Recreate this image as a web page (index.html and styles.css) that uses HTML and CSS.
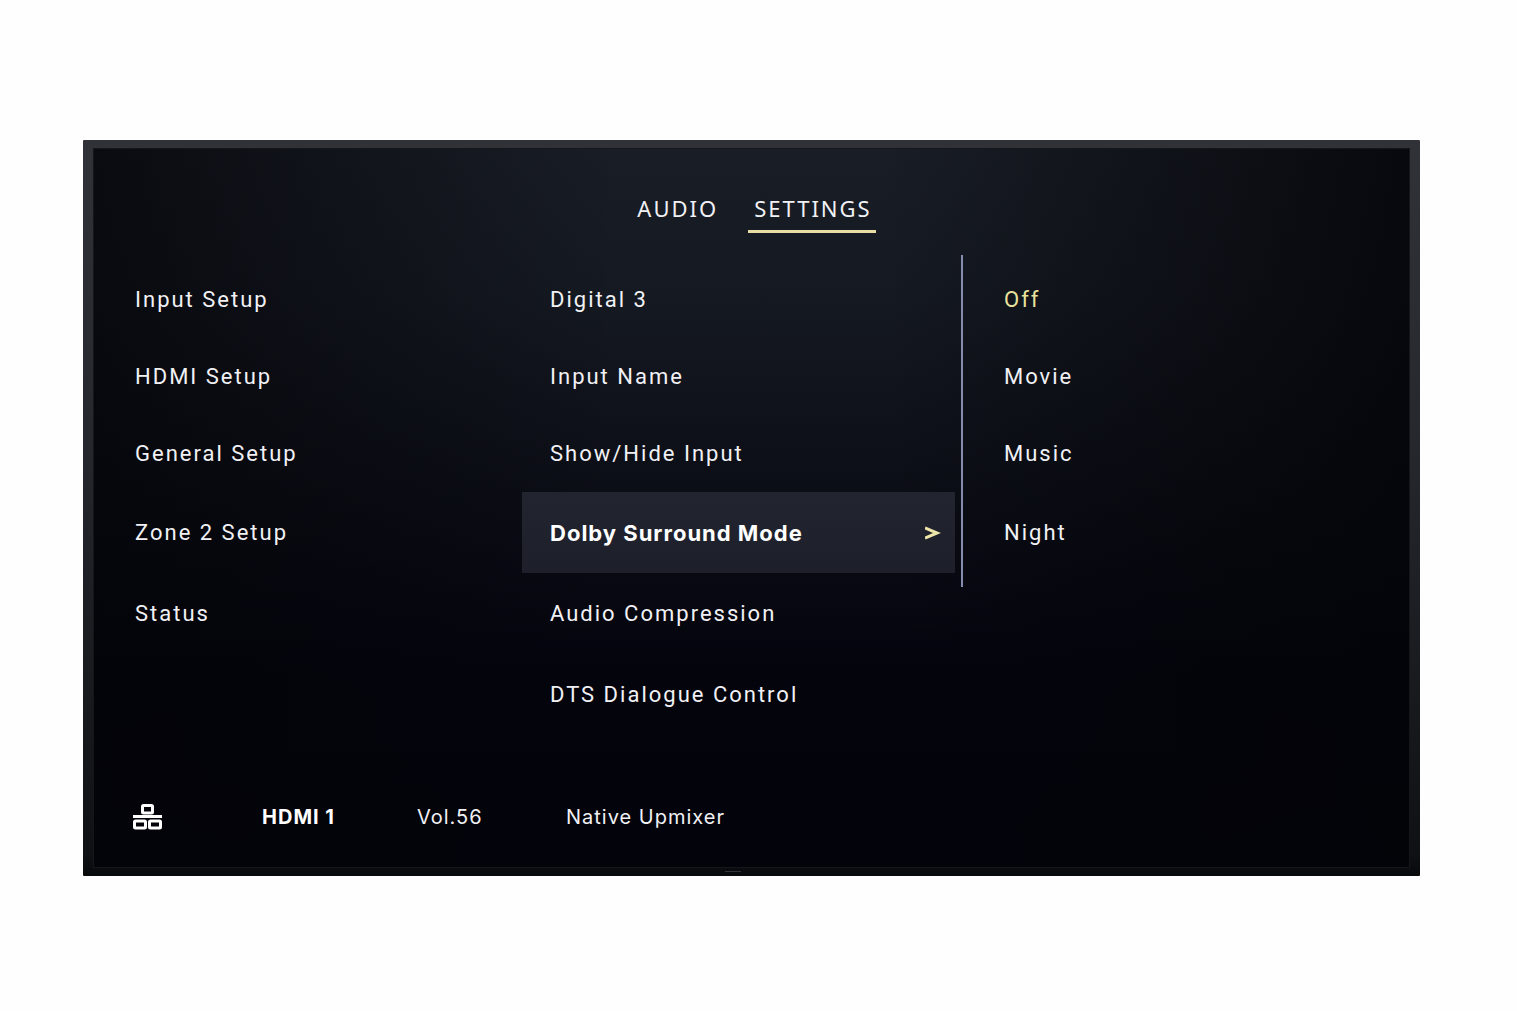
FILE: index.html
```html
<!DOCTYPE html>
<html lang="en">
<head>
  <meta charset="utf-8">
  <title>Settings</title>
  <link rel="stylesheet" href="styles.css">
</head>
<body>
  <div class="tv">
    <main class="screen">
      <nav class="tabs">
        <button class="tab">AUDIO</button>
        <button class="tab active">SETTINGS</button>
      </nav>

      <div class="columns">
        <!-- Setup sections -->
        <ul class="menu sections">
          <li><button>Input Setup</button></li>
          <li><button>HDMI Setup</button></li>
          <li><button>General Setup</button></li>
          <li><button>Zone 2 Setup</button></li>
          <li><button>Status</button></li>
        </ul>

        <!-- Input Setup entries -->
        <ul class="menu entries">
          <li><button>Digital 3</button></li>
          <li><button>Input Name</button></li>
          <li><button>Show/Hide Input</button></li>
          <li>
            <button class="selected">
              <span>Dolby Surround Mode</span>
              <svg class="arrow" width="16" height="14" viewBox="0 0 16 14" aria-hidden="true">
                <path d="M0 2 L12 7 L0 12" fill="none" stroke="currentColor" stroke-width="3"/>
              </svg>
            </button>
          </li>
          <li><button>Audio Compression</button></li>
          <li><button>DTS Dialogue Control</button></li>
        </ul>

        <!-- Values -->
        <ul class="menu values">
          <li><button class="current">Off</button></li>
          <li><button>Movie</button></li>
          <li><button>Music</button></li>
          <li><button>Night</button></li>
        </ul>
      </div>

      <footer class="status">
        <svg class="network" width="30" height="26" viewBox="0 0 30 26" role="img" aria-label="Wired network">
          <g fill="none" stroke="currentColor" stroke-width="3">
            <rect x="9.500" y="1.500" width="10" height="7.500" rx="1"/>
            <rect x="1.500" y="17" width="11" height="7" rx="1"/>
            <rect x="16.500" y="17" width="11" height="7" rx="1"/>
            <path d="M0 12.500 H29"/>
          </g>
        </svg>
        <span class="source">HDMI 1</span>
        <span class="volume">Vol.56</span>
        <span class="mode">Native Upmixer</span>
      </footer>
    </main>
    <div class="sensor"></div>
  </div>
</body>
</html>
```
FILE: styles.css
```css
* {
  box-sizing: border-box;
}
body {
  margin: 0;
  padding: 140px 97px 134px 83px;
  background: #fefefe;
  color: #f1f1f5;
  font-family: Roboto, "Noto Sans", sans-serif;
  font-size: 22px;
  line-height: 28px;
  letter-spacing: 2px;
}
button {
  margin: 0;
  padding: 0;
  border: none;
  background: none;
  color: inherit;
  font: inherit;
  letter-spacing: inherit;
  text-align: left;
  cursor: pointer;
}

/* Bezel */
.tv {
  position: relative;
  padding: 9px 11px;
  border-radius: 1px;
  background: linear-gradient(#303238, #27282e 40%, #101114 97%, #08090b);
}
.screen {
  padding-top: 41px;
  box-shadow: 0 0 0 1px #15161a;
  background:
    linear-gradient(90deg, rgba(3, 4, 8, 0.7), transparent 40%, transparent 60%, rgba(3, 4, 8, 0.8)),
    linear-gradient(#191d25, #151921 20%, #0b0d15 50%, #04040d 72%, #03030b);
}
.sensor {
  position: absolute;
  left: 48%;
  bottom: 4px;
  width: 16px;
  height: 1px;
  background: #34353a;
}

/* Tabs */
.tabs {
  display: flex;
  justify-content: center;
  gap: 26px;
  padding-left: 4px;
  font-family: "Noto Sans", sans-serif;
}
.tab {
  height: 43px;
  padding: 0 4px 4px 6px;
  border-bottom: 3px solid transparent;
}
.tab.active {
  border-color: #e8dea4;
}

/* Menu columns */
.columns {
  display: grid;
  grid-template-columns: 428fr 439fr 448fr;
  align-items: start;
  margin-top: 22px;
}
.menu {
  margin: 0;
  padding: 6px 0 14px;
  list-style: none;
}
.menu li {
  height: 77px;
}
.menu li:nth-child(n+4) {
  height: 81px;
}
.menu button {
  display: flex;
  align-items: center;
  width: 100%;
  height: 100%;
}
.sections button {
  padding-left: 41px;
}
.entries {
  padding-right: 6px;
}
.entries button {
  justify-content: space-between;
  padding: 0 14px 0 28px;
}
.entries .selected {
  background: linear-gradient(#22252f, #1d1f2a);
  color: #fff;
  font-family: Inter, sans-serif;
  font-weight: 700;
  letter-spacing: 1px;
}
.arrow {
  color: #eee5a8;
}
.values {
  border-left: 2px solid #858cae;
}
.values button {
  padding-left: 41px;
}
.values .current {
  color: #e9e29c;
}

/* Status bar */
.status {
  display: flex;
  align-items: center;
  height: 118px;
  padding: 18px 39px 0;
  font-family: Inter, sans-serif;
  font-size: 20px;
  letter-spacing: 1px;
}
.network {
  color: #fff;
}
.source {
  width: 155px;
  margin-left: 99px;
  color: #fff;
  font-weight: 700;
}
.volume {
  width: 149px;
}
```
